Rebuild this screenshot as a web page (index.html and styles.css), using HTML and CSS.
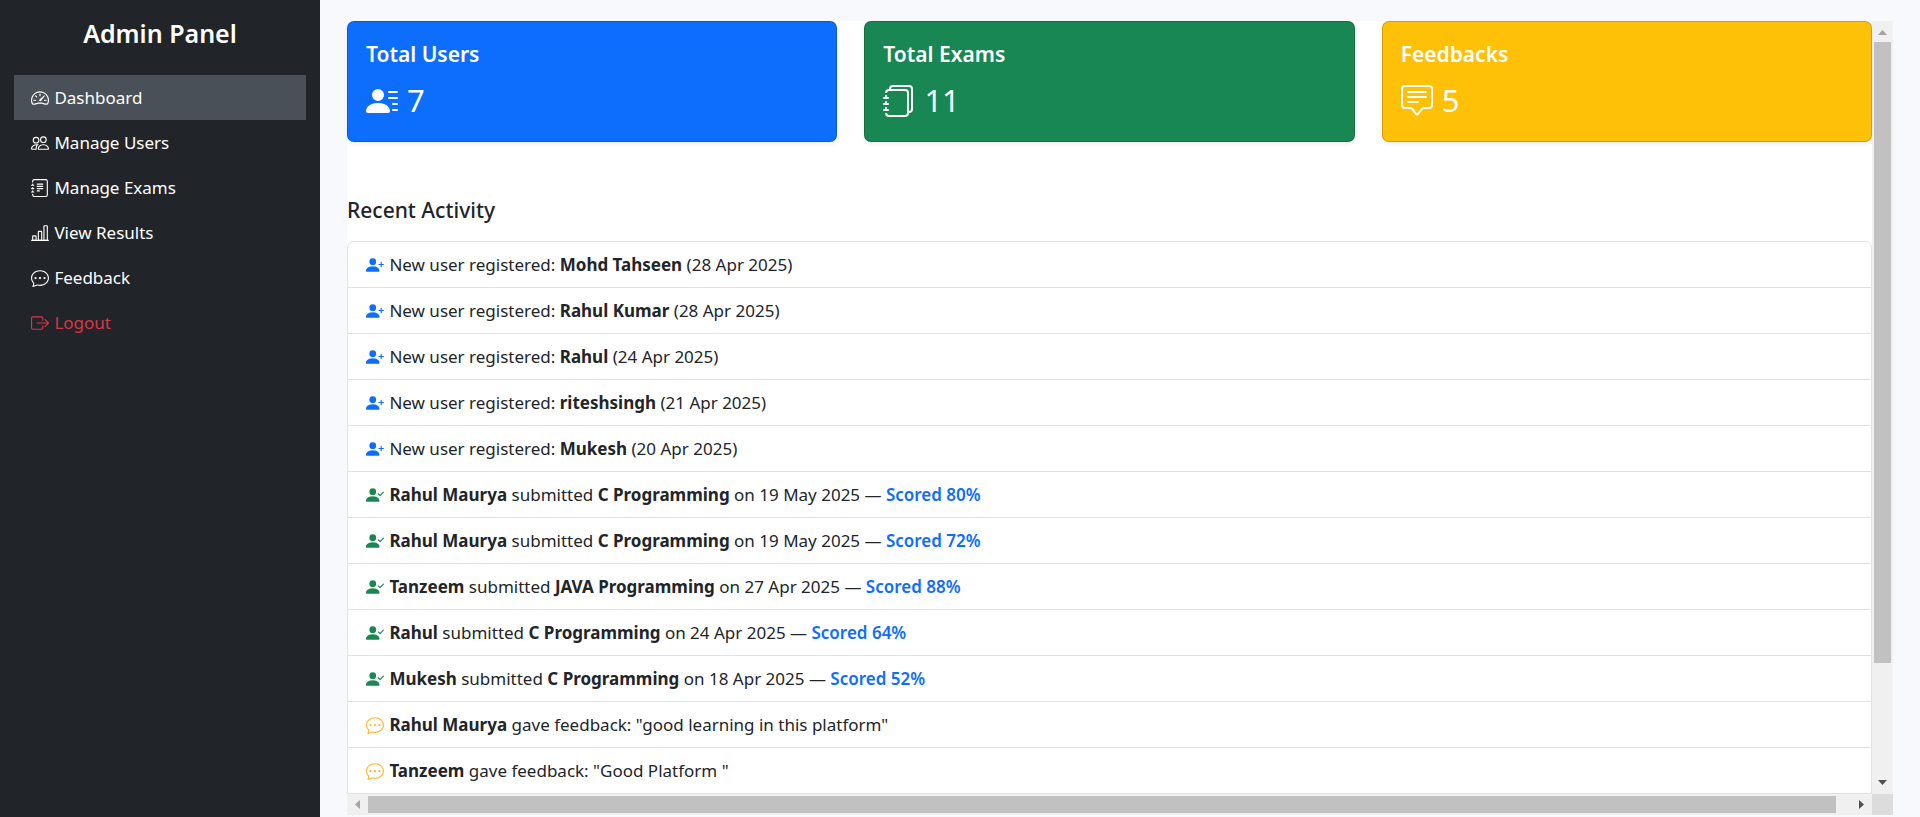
FILE: index.html
```html
<!DOCTYPE html>
<html lang="en">
<head>
<meta charset="utf-8">
<meta name="viewport" content="width=device-width, initial-scale=1">
<title>Admin Panel</title>
<link rel="stylesheet" href="styles.css">
</head>
<body>
<svg class="sprite" aria-hidden="true">
  <symbol id="speedometer" viewBox="0 0 16 16"><path d="M8 4a.5.5 0 0 1 .5.5V6a.5.5 0 0 1-1 0V4.500A.5.5 0 0 1 8 4M3.732 5.732a.5.5 0 0 1 .707 0l.915.914a.5.5 0 1 1-.708.708l-.914-.915a.5.5 0 0 1 0-.707M2 10a.5.5 0 0 1 .5-.5h1.586a.5.5 0 0 1 0 1H2.500A.5.5 0 0 1 2 10m9.500 0a.5.5 0 0 1 .5-.5h1.500a.5.5 0 0 1 0 1H12a.5.5 0 0 1-.5-.5m.754-4.246a.39.39 0 0 0-.527-.02L7.547 9.310a.91.91 0 1 0 1.302 1.258l3.434-4.297a.39.39 0 0 0-.029-.518z"/><path fill-rule="evenodd" d="M0 10a8 8 0 1 1 15.547 2.661c-.442 1.253-1.845 1.602-2.932 1.250C11.309 13.488 9.475 13 8 13c-1.474 0-3.310.488-4.615.911-1.087.352-2.490.003-2.932-1.250A8 8 0 0 1 0 10m8-7a7 7 0 0 0-6.603 9.329c.203.575.923.876 1.680.630C4.397 12.533 6.358 12 8 12s3.604.532 4.923.960c.757.245 1.477-.056 1.680-.631A7 7 0 0 0 8 3"/></symbol>
  <symbol id="people" viewBox="0 0 16 16"><path d="M15 14s1 0 1-1-1-4-5-4-5 3-5 4 1 1 1 1zm-7.978-1L7 12.996c.001-.264.167-1.030.760-1.720C8.312 10.629 9.282 10 11 10c1.717 0 2.687.630 3.240 1.276.593.690.758 1.457.760 1.720l-.008.002-.014.002zM11 7a2 2 0 1 0 0-4 2 2 0 0 0 0 4m3-2a3 3 0 1 1-6 0 3 3 0 0 1 6 0M6.936 9.280a6 6 0 0 0-1.230-.247A7 7 0 0 0 5 9c-4 0-5 3-5 4q0 1 1 1h4.216A2.240 2.240 0 0 1 5 13c0-1.010.377-2.042 1.090-2.904.243-.294.526-.569.846-.816M4.920 10A5.500 5.500 0 0 0 4 13H1c0-.260.164-1.030.760-1.724.545-.636 1.492-1.256 3.160-1.275ZM1.500 5.500a3 3 0 1 1 6 0 3 3 0 0 1-6 0m3-2a2 2 0 1 0 0 4 2 2 0 0 0 0-4"/></symbol>
  <symbol id="journal-text" viewBox="0 0 16 16"><path d="M5 10.500a.5.5 0 0 1 .5-.5h2a.5.5 0 0 1 0 1h-2a.5.5 0 0 1-.5-.5m0-2a.5.5 0 0 1 .5-.5h5a.5.5 0 0 1 0 1h-5a.5.5 0 0 1-.5-.5m0-2a.5.5 0 0 1 .5-.5h5a.5.5 0 0 1 0 1h-5a.5.5 0 0 1-.5-.5m0-2a.5.5 0 0 1 .5-.5h5a.5.5 0 0 1 0 1h-5a.5.5 0 0 1-.5-.5"/><path d="M3 0h10a2 2 0 0 1 2 2v12a2 2 0 0 1-2 2H3a2 2 0 0 1-2-2v-1h1v1a1 1 0 0 0 1 1h10a1 1 0 0 0 1-1V2a1 1 0 0 0-1-1H3a1 1 0 0 0-1 1v1H1V2a2 2 0 0 1 2-2"/><path d="M1 5v-.5a.5.5 0 0 1 1 0V5h.5a.5.5 0 0 1 0 1h-2a.5.5 0 0 1 0-1zm0 3v-.5a.5.5 0 0 1 1 0V8h.5a.5.5 0 0 1 0 1h-2a.5.5 0 0 1 0-1zm0 3v-.5a.5.5 0 0 1 1 0v.5h.5a.5.5 0 0 1 0 1h-2a.5.5 0 0 1 0-1z"/></symbol>
  <symbol id="bar-chart" viewBox="0 0 16 16"><path d="M4 11H2v3h2zm5-4H7v7h2zm5-5v12h-2V2zm-2-1a1 1 0 0 0-1 1v12a1 1 0 0 0 1 1h2a1 1 0 0 0 1-1V2a1 1 0 0 0-1-1zM6 7a1 1 0 0 1 1-1h2a1 1 0 0 1 1 1v7a1 1 0 0 1-1 1H7a1 1 0 0 1-1-1zm-5 4a1 1 0 0 1 1-1h2a1 1 0 0 1 1 1v3a1 1 0 0 1-1 1H2a1 1 0 0 1-1-1z"/><path d="M.5 14h15a.5.5 0 0 1 0 1H.5a.5.5 0 0 1 0-1"/></symbol>
  <symbol id="chat-dots" viewBox="0 0 16 16"><path d="M5 8a1 1 0 1 1-2 0 1 1 0 0 1 2 0m4 0a1 1 0 1 1-2 0 1 1 0 0 1 2 0m3 1a1 1 0 1 0 0-2 1 1 0 0 0 0 2"/><path d="m2.165 15.803.020-.004c1.830-.363 2.948-.842 3.468-1.105A9 9 0 0 0 8 15c4.418 0 8-3.134 8-7s-3.582-7-8-7-8 3.134-8 7c0 1.760.743 3.370 1.970 4.600a10.400 10.400 0 0 1-.524 2.318l-.003.011a11 11 0 0 1-.244.637c-.079.186.074.394.273.362a22 22 0 0 0 .693-.125m.800-3.108a1 1 0 0 0-.287-.801C1.618 10.830 1 9.468 1 8c0-3.192 3.004-6 7-6s7 2.808 7 6-3.004 6-7 6a8 8 0 0 1-2.088-.272 1 1 0 0 0-.711.074c-.387.196-1.240.570-2.634.893a11 11 0 0 0 .398-2"/></symbol>
  <symbol id="logout" viewBox="0 0 16 16"><path fill-rule="evenodd" d="M10 12.500a.5.5 0 0 1-.5.5h-8a.5.5 0 0 1-.5-.5v-9a.5.5 0 0 1 .5-.5h8a.5.5 0 0 1 .5.5v2a.5.5 0 0 0 1 0v-2A1.500 1.500 0 0 0 9.500 2h-8A1.500 1.500 0 0 0 0 3.500v9A1.500 1.500 0 0 0 1.500 14h8a1.500 1.500 0 0 0 1.500-1.500v-2a.5.5 0 0 0-1 0z"/><path fill-rule="evenodd" d="M15.854 8.354a.5.5 0 0 0 0-.708l-3-3a.5.5 0 0 0-.708.708L14.293 7.500H5.500a.5.5 0 0 0 0 1h8.793l-2.147 2.146a.5.5 0 0 0 .708.708z"/></symbol>
  <symbol id="person-lines" viewBox="0 0 16 16"><path d="M6 8a3 3 0 1 0 0-6 3 3 0 0 0 0 6m-5 6s-1 0-1-1 1-4 6-4 6 3 6 4-1 1-1 1zM11 3.500a.5.5 0 0 1 .5-.5h4a.5.5 0 0 1 0 1h-4a.5.5 0 0 1-.5-.5m.5 2.500a.5.5 0 0 0 0 1h4a.5.5 0 0 0 0-1zm2 3a.5.5 0 0 0 0 1h2a.5.5 0 0 0 0-1zm0 3a.5.5 0 0 0 0 1h2a.5.5 0 0 0 0-1z"/></symbol>
  <symbol id="journals" viewBox="0 0 16 16"><path d="M5 0h8a2 2 0 0 1 2 2v10a2 2 0 0 1-2 2 2 2 0 0 1-2 2H3a2 2 0 0 1-2-2h1a1 1 0 0 0 1 1h8a1 1 0 0 0 1-1V4a1 1 0 0 0-1-1H3a1 1 0 0 0-1 1H1a2 2 0 0 1 2-2h8a2 2 0 0 1 2 2v9a1 1 0 0 0 1-1V2a1 1 0 0 0-1-1H5a1 1 0 0 0-1 1H3a2 2 0 0 1 2-2"/><path d="M1 6v-.5a.5.5 0 0 1 1 0V6h.5a.5.5 0 0 1 0 1h-2a.5.5 0 0 1 0-1zm0 3v-.5a.5.5 0 0 1 1 0V9h.5a.5.5 0 0 1 0 1h-2a.5.5 0 0 1 0-1zm0 2.500v.5H.5a.5.5 0 0 0 0 1h2a.5.5 0 0 0 0-1H2v-.5a.5.5 0 0 0-1 0"/></symbol>
  <symbol id="chat-square-text" viewBox="0 0 16 16"><path d="M14 1a1 1 0 0 1 1 1v8a1 1 0 0 1-1 1h-2.500a2 2 0 0 0-1.600.800L8 14.333 6.100 11.800a2 2 0 0 0-1.600-.800H2a1 1 0 0 1-1-1V2a1 1 0 0 1 1-1zM2 0a2 2 0 0 0-2 2v8a2 2 0 0 0 2 2h2.500a1 1 0 0 1 .800.400l1.900 2.533a1 1 0 0 0 1.600 0l1.900-2.533a1 1 0 0 1 .800-.400H14a2 2 0 0 0 2-2V2a2 2 0 0 0-2-2z"/><path d="M3 3.500a.5.5 0 0 1 .5-.5h9a.5.5 0 0 1 0 1h-9a.5.5 0 0 1-.5-.5M3 6a.5.5 0 0 1 .5-.5h9a.5.5 0 0 1 0 1h-9A.5.5 0 0 1 3 6m0 2.500a.5.5 0 0 1 .5-.5h5a.5.5 0 0 1 0 1h-5a.5.5 0 0 1-.5-.5"/></symbol>
  <symbol id="person-plus" viewBox="0 0 16 16"><path d="M1 14s-1 0-1-1 1-4 6-4 6 3 6 4-1 1-1 1zm5-6a3 3 0 1 0 0-6 3 3 0 0 0 0 6"/><path d="M13.500 5a.5.5 0 0 1 .5.5V7h1.500a.5.5 0 0 1 0 1H14v1.500a.5.5 0 0 1-1 0V8h-1.500a.5.5 0 0 1 0-1H13V5.500a.5.5 0 0 1 .5-.5"/></symbol>
  <symbol id="person-check" viewBox="0 0 16 16"><path d="M15.854 5.146a.5.5 0 0 1 0 .708l-3 3a.5.5 0 0 1-.708 0l-1.500-1.500a.5.5 0 0 1 .708-.708L12.500 7.793l2.646-2.647a.5.5 0 0 1 .708 0"/><path d="M1 14s-1 0-1-1 1-4 6-4 6 3 6 4-1 1-1 1zm5-6a3 3 0 1 0 0-6 3 3 0 0 0 0 6"/></symbol>
</svg>

<div class="layout">
  <aside class="sidebar">
    <h1 class="brand">Admin Panel</h1>
    <nav class="nav">
      <a class="nav-link active" href="#"><svg class="icon"><use href="#speedometer"/></svg> Dashboard</a>
      <a class="nav-link" href="#"><svg class="icon"><use href="#people"/></svg> Manage Users</a>
      <a class="nav-link" href="#"><svg class="icon"><use href="#journal-text"/></svg> Manage Exams</a>
      <a class="nav-link" href="#"><svg class="icon"><use href="#bar-chart"/></svg> View Results</a>
      <a class="nav-link" href="#"><svg class="icon"><use href="#chat-dots"/></svg> Feedback</a>
      <a class="nav-link logout" href="#"><svg class="icon"><use href="#logout"/></svg> Logout</a>
    </nav>
  </aside>

  <main class="main">
    <div class="frame">
      <div class="content">
        <section class="cards">
          <article class="card users">
            <h2 class="card-title">Total Users</h2>
            <p class="card-value"><svg class="icon"><use href="#person-lines"/></svg> 7</p>
          </article>
          <article class="card exams">
            <h2 class="card-title">Total Exams</h2>
            <p class="card-value"><svg class="icon"><use href="#journals"/></svg> 11</p>
          </article>
          <article class="card feedbacks">
            <h2 class="card-title">Feedbacks</h2>
            <p class="card-value"><svg class="icon"><use href="#chat-square-text"/></svg> 5</p>
          </article>
        </section>

        <h2 class="section-title">Recent Activity</h2>
        <ul class="activity">
          <li><svg class="icon blue"><use href="#person-plus"/></svg> New user registered: <strong>Mohd Tahseen</strong> (28 Apr 2025)</li>
          <li><svg class="icon blue"><use href="#person-plus"/></svg> New user registered: <strong>Rahul Kumar</strong> (28 Apr 2025)</li>
          <li><svg class="icon blue"><use href="#person-plus"/></svg> New user registered: <strong>Rahul</strong> (24 Apr 2025)</li>
          <li><svg class="icon blue"><use href="#person-plus"/></svg> New user registered: <strong>riteshsingh</strong> (21 Apr 2025)</li>
          <li><svg class="icon blue"><use href="#person-plus"/></svg> New user registered: <strong>Mukesh</strong> (20 Apr 2025)</li>
          <li><svg class="icon green"><use href="#person-check"/></svg> <strong>Rahul Maurya</strong> submitted <strong>C Programming</strong> on 19 May 2025 — <span class="score">Scored 80%</span></li>
          <li><svg class="icon green"><use href="#person-check"/></svg> <strong>Rahul Maurya</strong> submitted <strong>C Programming</strong> on 19 May 2025 — <span class="score">Scored 72%</span></li>
          <li><svg class="icon green"><use href="#person-check"/></svg> <strong>Tanzeem</strong> submitted <strong>JAVA Programming</strong> on 27 Apr 2025 — <span class="score">Scored 88%</span></li>
          <li><svg class="icon green"><use href="#person-check"/></svg> <strong>Rahul</strong> submitted <strong>C Programming</strong> on 24 Apr 2025 — <span class="score">Scored 64%</span></li>
          <li><svg class="icon green"><use href="#person-check"/></svg> <strong>Mukesh</strong> submitted <strong>C Programming</strong> on 18 Apr 2025 — <span class="score">Scored 52%</span></li>
          <li><svg class="icon amber"><use href="#chat-dots"/></svg> <strong>Rahul Maurya</strong> gave feedback: "good learning in this platform"</li>
          <li><svg class="icon amber"><use href="#chat-dots"/></svg> <strong>Tanzeem</strong> gave feedback: "Good Platform "</li>
        </ul>
      </div>

      <div class="scrollbar vertical">
        <button class="arrow" type="button" aria-label="Scroll up" disabled><svg class="arrow-icon" viewBox="0 0 21 21"><path d="M6 14h9l-4.500-5z"/></svg></button>
        <div class="track"><div class="thumb"></div></div>
        <button class="arrow" type="button" aria-label="Scroll down"><svg class="arrow-icon" viewBox="0 0 21 21"><path d="M6 7h9l-4.500 5z"/></svg></button>
      </div>
      <div class="scrollbar horizontal">
        <button class="arrow" type="button" aria-label="Scroll left" disabled><svg class="arrow-icon" viewBox="0 0 21 21"><path d="M13 6v9l-5-4.500z"/></svg></button>
        <div class="track"><div class="thumb"></div></div>
        <button class="arrow" type="button" aria-label="Scroll right"><svg class="arrow-icon" viewBox="0 0 21 21"><path d="M8 6v9l5-4.500z"/></svg></button>
      </div>
      <div class="corner"></div>
    </div>
  </main>
</div>
</body>
</html>
```

FILE: styles.css
```css
* {
  box-sizing: border-box;
}

body {
  margin: 0;
  background: #f8f9fc;
  color: #212529;
  font-family: "Segoe UI", "Noto Sans", "Open Sans", sans-serif;
  font-size: 17px;
  line-height: 27px;
}

h1,
h2,
p,
ul {
  margin: 0;
  padding: 0;
}

.sprite {
  display: none;
}

.icon {
  width: 18px;
  height: 18px;
  margin-right: 1px;
  fill: currentColor;
  vertical-align: -3px;
}

.layout {
  display: flex;
  min-height: 100vh;
}

/* Sidebar */
.sidebar {
  flex: 0 0 320px;
  padding: 17px 14px;
  background: #212529;
  color: #fff;
}

.brand {
  margin-bottom: 26px;
  font-size: 25px;
  font-weight: 600;
  line-height: 32px;
  text-align: center;
}

.nav {
  display: flex;
  flex-direction: column;
}

.nav-link {
  padding: 9px 17px;
  color: #fff;
  text-decoration: none;
}

.nav-link.active {
  background: #495057;
}

.nav-link.logout {
  color: #dc3545;
}

/* Main area */
.main {
  flex: 1;
  min-width: 0;
  padding: 21px 27px 2px;
}

.frame {
  display: grid;
  grid-template-columns: minmax(0, 1fr) 21px;
  grid-template-rows: auto 21px;
}

.content {
  background: #fff;
}

.cards {
  display: grid;
  grid-template-columns: repeat(3, 1fr);
  gap: 27px;
}

.card {
  padding: 19px 18px 18px;
  border: 1px solid rgba(0, 0, 0, 0.175);
  border-radius: 7px;
  box-shadow: 0 2px 4px rgba(0, 0, 0, 0.075);
  color: #fff;
}

.users {
  background-color: #0d6efd;
}

.exams {
  background-color: #198754;
}

.feedbacks {
  background-color: #ffc107;
}

.card-title {
  margin-bottom: 9px;
  font-size: 21px;
  font-weight: 600;
  line-height: 27px;
}

.card-value {
  font-size: 31px;
  line-height: 46px;
}

.card-value .icon {
  width: 32px;
  height: 32px;
  vertical-align: -5px;
}

.section-title {
  margin: 55px 0 17px;
  font-size: 21px;
  font-weight: 500;
  line-height: 27px;
}

.activity {
  border: 1px solid #dee2e6;
  border-radius: 7px 7px 0 0;
  list-style: none;
}

.activity li {
  padding: 9px 18px;
}

.activity li + li {
  border-top: 1px solid #dee2e6;
}

.activity strong {
  font-weight: 700;
}

.score {
  color: #0d6efd;
  font-weight: 600;
}

.blue {
  color: #0d6efd;
}

.green {
  color: #198754;
}

.amber {
  color: #ffb52e;
}

/* Scrollbars */
.scrollbar {
  display: flex;
  background: #f0f0f0;
}

.vertical {
  flex-direction: column;
}

.arrow {
  flex: 0 0 21px;
  width: 21px;
  height: 21px;
  padding: 0;
  border: 0;
  background: none;
  color: #505050;
}

.arrow:disabled {
  color: #a3a3a3;
}

.arrow-icon {
  display: block;
  width: 21px;
  height: 21px;
  fill: currentColor;
}

.track {
  display: flex;
  flex: 1;
}

.thumb {
  background: #c1c1c1;
}

.vertical .track {
  flex-direction: column;
  padding: 0 2px;
}

.vertical .thumb {
  height: 85%;
}

.horizontal .track {
  padding: 2px 0;
}

.horizontal .thumb {
  width: 99%;
}

.corner {
  background: #dcdcdc;
}
```
